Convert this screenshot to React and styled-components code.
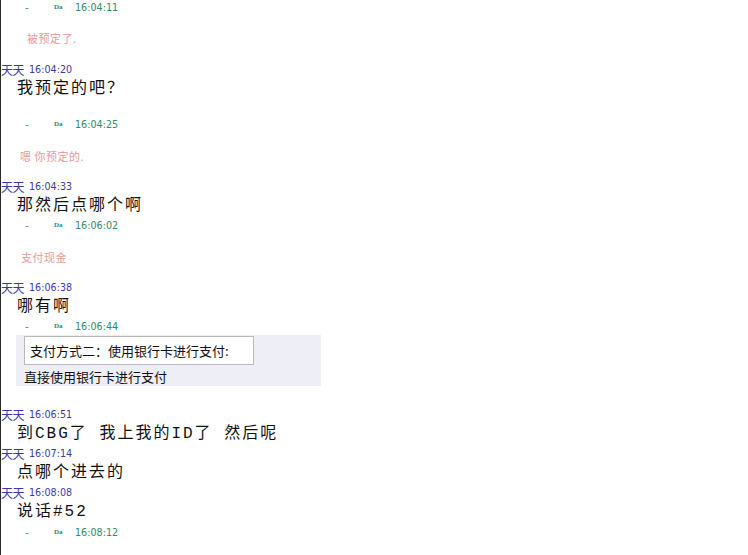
import styled, { createGlobalStyle } from "styled-components";

const GlobalStyle = createGlobalStyle`
  html, body {
    margin: 0;
    padding: 0;
    background: #ffffff;
  }
`;

const Log = styled.div`
  display: flex;
  flex-direction: column;
  min-height: 100vh;
  box-sizing: border-box;
  border-left: 1px solid #2a2a2a;
  font-family: "Noto Sans CJK SC", sans-serif;
`;

const Meta = styled.div`
  display: flex;
  align-items: center;
  height: 14px;
  margin-top: ${({ mt }) => mt || 0}px;
  color: #2f8a6c;
  font-family: "DejaVu Sans", sans-serif;
  font-size: 9.6px;
`;

const Dash = styled.span`
  width: 26px;
  margin-left: 24px;
`;

const Nick = styled.span`
  width: 20px;
  font-family: "Liberation Serif", serif;
  font-weight: bold;
  font-size: 7px;
  margin-left: -22px;
  margin-right: 1px;
  padding-left: 25px;
  box-sizing: content-box;
`;

const Notice = styled.div`
  height: 20px;
  line-height: 20px;
  margin-top: ${({ mt }) => mt || 0}px;
  padding-left: ${({ indent }) => indent}px;
  color: #e59a9a;
  font-size: 11px;
  letter-spacing: 0.5px;
`;

const Name = styled.div`
  display: flex;
  align-items: center;
  gap: 5px;
  height: 18px;
  margin-top: ${({ mt }) => mt || 0}px;
  color: #3b3aa6;
`;

const Who = styled.span`
  font-size: 12px;
  letter-spacing: -0.5px;
`;

const Stamp = styled.span`
  font-family: "DejaVu Sans", sans-serif;
  font-size: 9.6px;
`;

const Said = styled.div`
  height: 20px;
  line-height: 20px;
  margin-top: 1px;
  padding-left: 16px;
  color: #111;
  font-family: "Liberation Mono", "Noto Sans CJK SC", monospace;
  font-size: 16px;
  letter-spacing: 2px;
  white-space: pre;
`;

const Card = styled.div`
  width: 305px;
  height: 51px;
  margin: 2px 0 0 15px;
  background: #eeeef7;
  display: flex;
  flex-direction: column;
`;

const CardTitle = styled.div`
  width: 230px;
  height: 29px;
  margin: 1px 0 0 8px;
  box-sizing: border-box;
  border: 1px solid #b9b9bf;
  background: #ffffff;
  display: flex;
  align-items: center;
  padding-left: 5px;
  font-size: 13px;
  color: #111;
`;

const CardLine = styled.div`
  height: 21px;
  display: flex;
  align-items: flex-end;
  padding-left: 8px;
  font-size: 13px;
  color: #111;
`;

const MetaLine = ({ time, mt }) => (
  <Meta mt={mt}>
    <Dash>-</Dash>
    <Nick>Da</Nick>
    <span>{time}</span>
  </Meta>
);

const Message = ({ time, text, mt }) => (
  <>
    <Name mt={mt}>
      <Who>天天</Who>
      <Stamp>{time}</Stamp>
    </Name>
    <Said>{text}</Said>
  </>
);

export default function App() {
  return (
    <Log>
      <GlobalStyle />
      <MetaLine time="16:04:11" />
      <Notice mt={14} indent={26}>被预定了.</Notice>
      <Message mt={12} time="16:04:20" text="我预定的吧？" />
      <MetaLine mt={18} time="16:04:25" />
      <Notice mt={15} indent={19}>嗯 你预定的.</Notice>
      <Message mt={11} time="16:04:33" text="那然后点哪个啊" />
      <MetaLine mt={2} time="16:06:02" />
      <Notice mt={15} indent={20}>支付现金</Notice>
      <Message mt={11} time="16:06:38" text="哪有啊" />
      <MetaLine mt={2} time="16:06:44" />
      <Card>
        <CardTitle>支付方式二：使用银行卡进行支付:</CardTitle>
        <CardLine>直接使用银行卡进行支付</CardLine>
      </Card>
      <Message mt={19} time="16:06:51" text="到CBG了 我上我的ID了 然后呢" />
      <Message time="16:07:14" text="点哪个进去的" />
      <Message time="16:08:08" text="说话#52" />
      <MetaLine mt={3} time="16:08:12" />
    </Log>
  );
}
